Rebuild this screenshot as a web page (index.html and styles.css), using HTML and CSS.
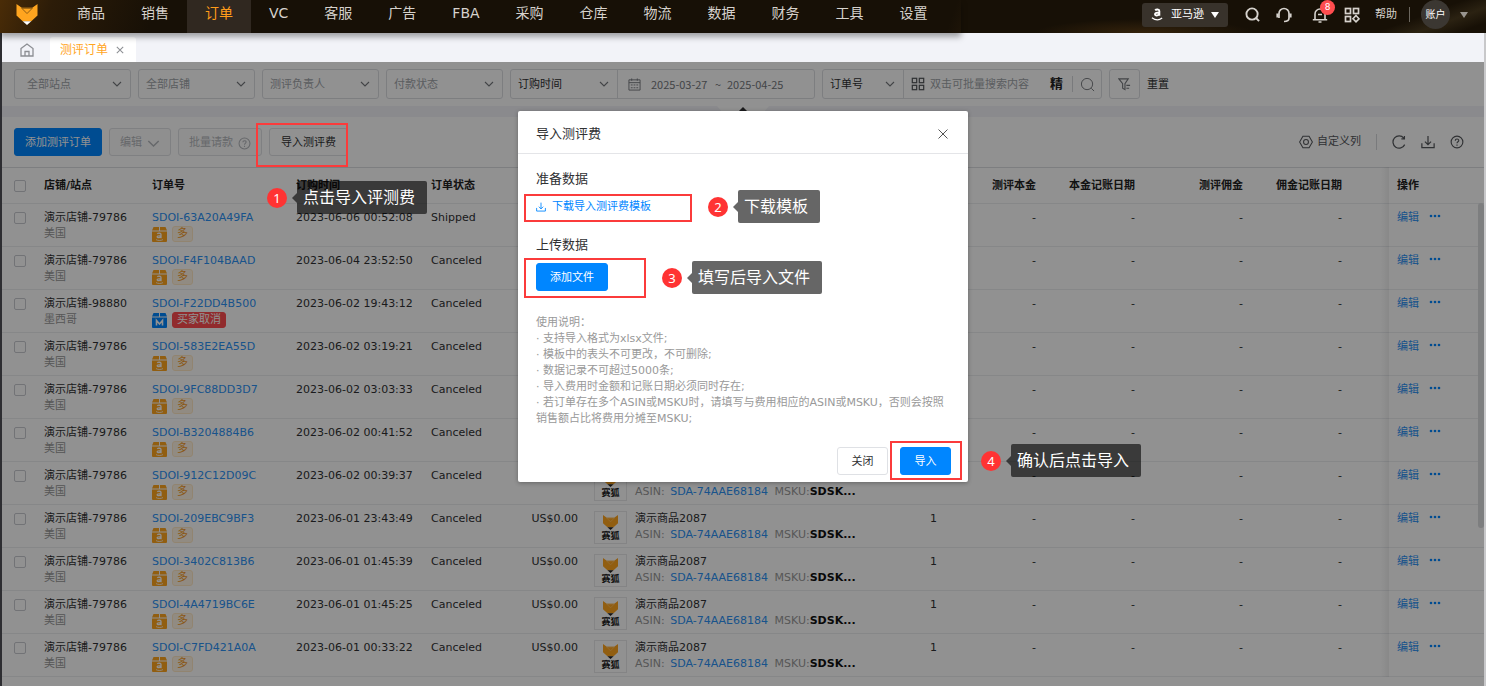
FILE: index.html
```html
<!DOCTYPE html>
<html lang="zh-CN">
<head>
<meta charset="utf-8">
<title>测评订单</title>
<link rel="stylesheet" href="styles.css">
</head>
<body>
<svg class="sprite" aria-hidden="true">
  <symbol id="fox" viewBox="0 0 22 22"><path fill="#ffa51f" d="M0 0l5.500 4h11L22 0v12l-6.500 6h-9L0 12z"/><path class="fox-face" fill="none" stroke-width="1" d="M5.500 4.500L11 10l5.500-5.500z"/><path fill="currentColor" d="M6.500 18h9L11 22z"/></symbol>
  <symbol id="chev" viewBox="0 0 10 10"><path fill="none" stroke="currentColor" stroke-width="1.100" d="M1 3l4 4 4-4"/></symbol>
  <symbol id="box-a" viewBox="0 0 15 15"><path fill="#ffa51f" d="M1.500 0H7v3.500H0zM8 0h5.500L15 3.500H8zM0 4.500h15V14a1 1 0 0 1-1 1H1a1 1 0 0 1-1-1z"/><path fill="none" stroke="#fff" stroke-width="1.300" d="M5.300 6.900c.8-1 3.700-1 3.700.7v3.600M9 8.600c-1.900 0-3.800 0-3.800 1.200 0 1.300 2.700 1.200 3.800-.3"/><path fill="none" stroke="#fff" stroke-width=".8" d="M4 12.600c2 1.200 5 1.200 7 0"/></symbol>
  <symbol id="box-m" viewBox="0 0 15 15"><path fill="#0086ff" d="M1.500 0H7v3.500H0zM8 0h5.500L15 3.500H8zM0 4.500h15V14a1 1 0 0 1-1 1H1a1 1 0 0 1-1-1z"/><path fill="none" stroke="#fff" stroke-width="1.600" d="M4.500 12.500V7.500l3 3.500 3-3.500v5"/></symbol>
  <symbol id="grid" viewBox="0 0 16 16"><g fill="none" stroke="currentColor" stroke-width="1.400"><rect x="1.500" y="1.500" width="5" height="5"/><rect x="9.500" y="1.500" width="5" height="5"/><rect x="1.500" y="9.500" width="5" height="5"/><rect x="9.500" y="9.500" width="5" height="5"/></g></symbol>
  <symbol id="search" viewBox="0 0 16 16"><g fill="none" stroke="currentColor"><circle cx="7.500" cy="7.500" r="6"/><path d="M12 12l3 3"/></g></symbol>
  <symbol id="help" viewBox="0 0 16 16"><g fill="none" stroke="currentColor" stroke-width="1.300"><circle cx="8" cy="8" r="6.700"/><path d="M6 6.500c0-2.600 4-2.600 4-.2 0 1.500-2 1.500-2 3.200M8 10.800v1.400"/></g></symbol>
  <symbol id="down" viewBox="0 0 16 16"><path fill="none" stroke="currentColor" stroke-width="1.400" d="M8 1v10M4.500 7.500L8 11l3.500-3.500M1 9.500v5h14v-5"/></symbol>
  <symbol id="dots" viewBox="0 0 12 4"><g fill="currentColor"><circle cx="2" cy="2" r="1.300"/><circle cx="6" cy="2" r="1.300"/><circle cx="10" cy="2" r="1.300"/></g></symbol>
</svg>

<header class="topbar">
  <div class="brand-nav">
    <a class="logo" href="#" aria-label="赛狐"><svg><use href="#fox"/></svg></a>
    <nav class="nav">
      <a href="#">商品</a><a href="#">销售</a><a href="#" class="active">订单</a><a href="#">VC</a><a href="#">客服</a><a href="#">广告</a><a href="#">FBA</a><a href="#">采购</a><a href="#">仓库</a><a href="#">物流</a><a href="#">数据</a><a href="#">财务</a><a href="#">工具</a><a href="#">设置</a>
    </nav>
  </div>
  <div class="tools">
    <button class="platform" type="button">
      <svg class="i13" viewBox="0 0 14 14"><g fill="none" stroke="#fff"><path stroke-width="2" d="M4.500 2.500c1-1.300 4.500-1.400 4.500.8v5M9 4.800c-2.500 0-4.700.2-4.700 2 0 2 3.700 1.600 4.700-.5"/><path stroke-width="1.300" d="M1 10.500c3.500 2.700 8 2.700 11 .3"/></g></svg>
      亚马逊 <i class="caret"></i>
    </button>
    <button class="tool" type="button" aria-label="搜索"><svg class="i15 bold"><use href="#search"/></svg></button>
    <button class="tool" type="button" aria-label="客服"><svg class="i16" viewBox="0 0 16 16"><g fill="none" stroke="currentColor" stroke-width="1.700"><path d="M3 11V6.500a5 5 0 0 1 10 0V11c0 2-2 3.500-5 3.500"/><path stroke-width="2.200" d="M1.500 6.500v4M14.500 6.500v4"/></g></svg></button>
    <button class="tool bell" type="button" aria-label="通知"><svg class="i16" viewBox="0 0 16 16"><path fill="none" stroke="currentColor" stroke-width="1.600" d="M3 12.500V7a5 5 0 0 1 10 0v5.500M.8 12.700h14.400M6 7.500h4M6.500 15h3"/></svg><span class="count">8</span></button>
    <button class="tool" type="button" aria-label="应用"><svg class="i16" viewBox="0 0 16 16"><g fill="none" stroke="currentColor" stroke-width="1.700"><rect x="1.500" y="1.500" width="5" height="5"/><rect x="9.500" y="1.500" width="5" height="5"/><rect x="1.500" y="9.500" width="5" height="5"/><path d="M12 8.500l3 3.300-3 3-3-3z"/></g></svg></button>
    <a class="help-link" href="#">帮助</a>
    <span class="bar"></span>
    <button class="account" type="button">账户</button>
    <i class="caret dim"></i>
  </div>
</header>

<div class="shell">
  <div class="tabs">
    <a class="home" href="#" aria-label="首页"><svg class="i14" viewBox="0 0 14 14"><path fill="none" stroke="#8c8e93" stroke-width="1.300" d="M1 5.500L7 1l6 4.500V13H1zM5 13V8.500h4V13"/></svg></a>
    <div class="tab">测评订单 <button type="button" aria-label="关闭标签"><svg viewBox="0 0 10 10"><path stroke="#8c8e93" stroke-width="1.300" d="M1 1l8 8M9 1L1 9"/></svg></button></div>
  </div>

  <main class="work">
    <form class="filters">
      <label class="field pick"><select aria-label="站点"><option>全部站点</option></select><svg class="i10"><use href="#chev"/></svg></label>
      <label class="field pick"><select aria-label="店铺"><option>全部店铺</option></select><svg class="i10"><use href="#chev"/></svg></label>
      <label class="field pick"><select aria-label="测评负责人"><option>测评负责人</option></select><svg class="i10"><use href="#chev"/></svg></label>
      <label class="field pick"><select aria-label="付款状态"><option>付款状态</option></select><svg class="i10"><use href="#chev"/></svg></label>
      <div class="field dates">
        <label class="part time-part"><select aria-label="时间类型"><option>订购时间</option></select><svg class="i10"><use href="#chev"/></svg></label>
        <svg class="i13 cal" viewBox="0 0 14 14"><g fill="none" stroke="currentColor"><path d="M1 2h12v11H1zM1 5h12M4 .5V3M10 .5V3"/><path stroke-dasharray="2 1" d="M3 7.500h8M3 10.500h8"/></g></svg>
        <input class="date" aria-label="开始日期" value="2025-03-27"><span>~</span><input class="date" aria-label="结束日期" value="2025-04-25">
      </div>
      <div class="field query">
        <label class="part no-part"><select aria-label="搜索类型"><option>订单号</option></select><svg class="i10"><use href="#chev"/></svg></label>
        <svg class="i14 grid"><use href="#grid"/></svg>
        <input class="keyword" aria-label="搜索内容" placeholder="双击可批量搜索内容">
        <b>精</b><span class="sep"></span><button type="button" aria-label="搜索"><svg class="i15"><use href="#search"/></svg></button>
      </div>
      <button class="field funnel" type="button" aria-label="筛选"><svg class="i13" viewBox="0 0 14 14"><path fill="none" stroke="currentColor" stroke-width="1.200" d="M1 1h10L7.500 6v6.500L5 11V6zM9 8h4M9 11h3"/></svg></button>
      <button class="plain" type="button">重置</button>
    </form>
    <div class="band"><button type="button" class="fold" aria-label="收起"><i></i></button></div>

    <div class="toolbar">
      <button class="btn primary" type="button">添加测评订单</button>
      <button class="btn" type="button" disabled>编辑 <svg class="i13"><use href="#chev"/></svg></button>
      <button class="btn" type="button" disabled>批量请款 <svg class="i13"><use href="#help"/></svg></button>
      <button class="btn wide" type="button">导入测评费</button>
      <div class="right">
        <button class="plain cols" type="button"><svg class="i14" viewBox="0 0 16 16"><g fill="none" stroke="currentColor" stroke-width="1.200"><path d="M4.500 1.500h7L15.300 8l-3.800 6.500h-7L.7 8z"/><circle cx="8" cy="8" r="2.800"/></g></svg>自定义列</button>
        <span class="sep"></span>
        <button class="plain" type="button" aria-label="刷新"><svg class="i14" viewBox="0 0 16 16"><path fill="none" stroke="currentColor" stroke-width="1.400" d="M14.500 11A7 7 0 1 1 13.500 3.500M14.200 1v3.500h-3.500"/></svg></button>
        <button class="plain" type="button" aria-label="下载"><svg class="i14"><use href="#down"/></svg></button>
        <button class="plain" type="button" aria-label="帮助"><svg class="i14"><use href="#help"/></svg></button>
      </div>
    </div>

    <div class="list">
    <table class="orders">
      <colgroup><col class="w-check"><col class="w-store"><col class="w-no"><col class="w-time"><col class="w-state"><col class="w-price"><col><col class="w-qty"><col class="w-a"><col class="w-a"><col class="w-b"><col class="w-c"><col class="w-op"></colgroup>
      <thead><tr><th><input type="checkbox" aria-label="全选"></th><th>店铺/站点</th><th>订单号</th><th>订购时间</th><th>订单状态</th><th></th><th></th><th></th><th class="r">测评本金</th><th class="r">本金记账日期</th><th class="r">测评佣金</th><th class="r last">佣金记账日期</th><th class="op">操作</th></tr></thead>
      <tbody>
      <tr><td><input type="checkbox" aria-label="选择"></td><td>演示店铺-79786<small>美国</small></td><td><a href="#">SDOI-63A20A49FA</a><div class="tags"><svg><use href="#box-a"/></svg><em>多</em></div></td><td>2023-06-06 00:52:08</td><td>Shipped</td><td></td><td></td><td></td><td class="r">-</td><td class="r">-</td><td class="r">-</td><td class="r last">-</td><td class="op"><a href="#">编辑</a><svg><use href="#dots"/></svg></td></tr>
      <tr><td><input type="checkbox" aria-label="选择"></td><td>演示店铺-79786<small>美国</small></td><td><a href="#">SDOI-F4F104BAAD</a><div class="tags"><svg><use href="#box-a"/></svg><em>多</em></div></td><td>2023-06-04 23:52:50</td><td>Canceled</td><td></td><td></td><td></td><td class="r">-</td><td class="r">-</td><td class="r">-</td><td class="r last">-</td><td class="op"><a href="#">编辑</a><svg><use href="#dots"/></svg></td></tr>
      <tr><td><input type="checkbox" aria-label="选择"></td><td>演示店铺-98880<small>墨西哥</small></td><td><a href="#">SDOI-F22DD4B500</a><div class="tags"><svg><use href="#box-m"/></svg><em class="cancel">买家取消</em></div></td><td>2023-06-02 19:43:12</td><td>Canceled</td><td></td><td></td><td></td><td class="r">-</td><td class="r">-</td><td class="r">-</td><td class="r last">-</td><td class="op"><a href="#">编辑</a><svg><use href="#dots"/></svg></td></tr>
      <tr><td><input type="checkbox" aria-label="选择"></td><td>演示店铺-79786<small>美国</small></td><td><a href="#">SDOI-583E2EA55D</a><div class="tags"><svg><use href="#box-a"/></svg><em>多</em></div></td><td>2023-06-02 03:19:21</td><td>Canceled</td><td></td><td></td><td></td><td class="r">-</td><td class="r">-</td><td class="r">-</td><td class="r last">-</td><td class="op"><a href="#">编辑</a><svg><use href="#dots"/></svg></td></tr>
      <tr><td><input type="checkbox" aria-label="选择"></td><td>演示店铺-79786<small>美国</small></td><td><a href="#">SDOI-9FC88DD3D7</a><div class="tags"><svg><use href="#box-a"/></svg><em>多</em></div></td><td>2023-06-02 03:03:33</td><td>Canceled</td><td></td><td></td><td></td><td class="r">-</td><td class="r">-</td><td class="r">-</td><td class="r last">-</td><td class="op"><a href="#">编辑</a><svg><use href="#dots"/></svg></td></tr>
      <tr><td><input type="checkbox" aria-label="选择"></td><td>演示店铺-79786<small>美国</small></td><td><a href="#">SDOI-B3204884B6</a><div class="tags"><svg><use href="#box-a"/></svg><em>多</em></div></td><td>2023-06-02 00:41:52</td><td>Canceled</td><td></td><td></td><td></td><td class="r">-</td><td class="r">-</td><td class="r">-</td><td class="r last">-</td><td class="op"><a href="#">编辑</a><svg><use href="#dots"/></svg></td></tr>
      <tr><td><input type="checkbox" aria-label="选择"></td><td>演示店铺-79786<small>美国</small></td><td><a href="#">SDOI-912C12D09C</a><div class="tags"><svg><use href="#box-a"/></svg><em>多</em></div></td><td>2023-06-02 00:39:37</td><td>Canceled</td><td></td><td><div class="goods"><div class="thumb"><svg><use href="#fox"/></svg><b>赛狐</b></div><div>&nbsp;<small>ASIN: <a href="#">SDA-74AAE68184</a> <span>MSKU:<b>SDSK...</b></span></small></div></div></td><td></td><td class="r">-</td><td class="r">-</td><td class="r">-</td><td class="r last">-</td><td class="op"><a href="#">编辑</a><svg><use href="#dots"/></svg></td></tr>
      <tr><td><input type="checkbox" aria-label="选择"></td><td>演示店铺-79786<small>美国</small></td><td><a href="#">SDOI-209EBC9BF3</a><div class="tags"><svg><use href="#box-a"/></svg><em>多</em></div></td><td>2023-06-01 23:43:49</td><td>Canceled</td><td class="r">US$0.00</td><td><div class="goods"><div class="thumb"><svg><use href="#fox"/></svg><b>赛狐</b></div><div>演示商品2087<small>ASIN: <a href="#">SDA-74AAE68184</a> <span>MSKU:<b>SDSK...</b></span></small></div></div></td><td class="r">1</td><td class="r">-</td><td class="r">-</td><td class="r">-</td><td class="r last">-</td><td class="op"><a href="#">编辑</a><svg><use href="#dots"/></svg></td></tr>
      <tr><td><input type="checkbox" aria-label="选择"></td><td>演示店铺-79786<small>美国</small></td><td><a href="#">SDOI-3402C813B6</a><div class="tags"><svg><use href="#box-a"/></svg><em>多</em></div></td><td>2023-06-01 01:45:39</td><td>Canceled</td><td class="r">US$0.00</td><td><div class="goods"><div class="thumb"><svg><use href="#fox"/></svg><b>赛狐</b></div><div>演示商品2087<small>ASIN: <a href="#">SDA-74AAE68184</a> <span>MSKU:<b>SDSK...</b></span></small></div></div></td><td class="r">1</td><td class="r">-</td><td class="r">-</td><td class="r">-</td><td class="r last">-</td><td class="op"><a href="#">编辑</a><svg><use href="#dots"/></svg></td></tr>
      <tr><td><input type="checkbox" aria-label="选择"></td><td>演示店铺-79786<small>美国</small></td><td><a href="#">SDOI-4A4719BC6E</a><div class="tags"><svg><use href="#box-a"/></svg><em>多</em></div></td><td>2023-06-01 01:45:25</td><td>Canceled</td><td class="r">US$0.00</td><td><div class="goods"><div class="thumb"><svg><use href="#fox"/></svg><b>赛狐</b></div><div>演示商品2087<small>ASIN: <a href="#">SDA-74AAE68184</a> <span>MSKU:<b>SDSK...</b></span></small></div></div></td><td class="r">1</td><td class="r">-</td><td class="r">-</td><td class="r">-</td><td class="r last">-</td><td class="op"><a href="#">编辑</a><svg><use href="#dots"/></svg></td></tr>
      <tr><td><input type="checkbox" aria-label="选择"></td><td>演示店铺-79786<small>美国</small></td><td><a href="#">SDOI-C7FD421A0A</a><div class="tags"><svg><use href="#box-a"/></svg><em>多</em></div></td><td>2023-06-01 00:33:22</td><td>Canceled</td><td class="r">US$0.00</td><td><div class="goods"><div class="thumb"><svg><use href="#fox"/></svg><b>赛狐</b></div><div>演示商品2087<small>ASIN: <a href="#">SDA-74AAE68184</a> <span>MSKU:<b>SDSK...</b></span></small></div></div></td><td class="r">1</td><td class="r">-</td><td class="r">-</td><td class="r">-</td><td class="r last">-</td><td class="op"><a href="#">编辑</a><svg><use href="#dots"/></svg></td></tr>
      </tbody>
    </table>
    <div class="fixed-edge"></div>
    <div class="thumb-bar"></div>
    </div>

    <div class="mask">
      <section class="dialog" role="dialog" aria-label="导入测评费">
        <div class="dialog-head"><h2>导入测评费</h2><button type="button" aria-label="关闭"><svg viewBox="0 0 10 10"><path stroke="#555" d="M.5.5l9 9M9.500.5l-9 9"/></svg></button></div>
        <div class="dialog-body">
          <h3>准备数据</h3>
          <a class="download" href="#"><svg class="i10"><use href="#down"/></svg>下载导入测评费模板</a>
          <h3>上传数据</h3>
          <button class="btn primary upload" type="button">添加文件</button>
          <div class="notes">
            <p>使用说明：</p>
            <p>· 支持导入格式为xlsx文件;</p>
            <p>· 模板中的表头不可更改，不可删除;</p>
            <p>· 数据记录不可超过5000条;</p>
            <p>· 导入费用时金额和记账日期必须同时存在;</p>
            <p>· 若订单存在多个ASIN或MSKU时，请填写与费用相应的ASIN或MSKU，否则会按照销售额占比将费用分摊至MSKU;</p>
          </div>
        </div>
        <div class="dialog-foot"><button class="btn" type="button">关闭</button><button class="btn primary" type="button">导入</button></div>
        <div class="frame f2"></div><div class="frame f3"></div><div class="frame f4"></div>
        <div class="step s2"><span>2</span><p>下载模板</p></div>
        <div class="step s3"><span>3</span><p>填写后导入文件</p></div>
        <div class="step s4"><span>4</span><p>确认后点击导入</p></div>
      </section>
    </div>
    <div class="frame f1"></div>
    <div class="step s1"><span>1</span><p>点击导入评测费</p></div>
  </main>
</div>
</body>
</html>
```

FILE: styles.css
```css
* { box-sizing: border-box; }
body {
  margin: 0; height: 100vh; overflow: hidden; display: flex; flex-direction: column;
  font: 11px/16px "DejaVu Sans", "Noto Sans CJK SC", sans-serif; color: #303133; background: #fff;
}
button, input, select { font: inherit; color: inherit; margin: 0; padding: 0; border: 0; background: none; outline: 0; }
a { color: #2c92f5; text-decoration: none; }
h2, h3, p { margin: 0; font-weight: 400; }
svg { display: block; flex: none; }
.sprite { position: absolute; width: 0; height: 0; }
.i10 { width: 10px; height: 10px; }
.i13 { width: 13px; height: 13px; }
.i14 { width: 14px; height: 14px; }
.i15 { width: 15px; height: 15px; }
.i16 { width: 16px; height: 16px; }
.bold { stroke-width: 2; }
.fox-face { stroke: var(--face); }

/* top bar */
.topbar {
  flex: none; height: 33px; display: flex; justify-content: space-between; position: relative; z-index: 2; color: #d6d2cd;
  background: radial-gradient(ellipse 110px 14px at 77% 100%, #35230c, transparent), linear-gradient(160deg, transparent 60%, #2b2212 75%, transparent 90%) right / 190px 100% no-repeat, #171006;
}
.brand-nav {
  display: flex; width: 961px; box-shadow: 0 4px 6px rgba(0, 0, 0, .35);
  background: linear-gradient(110deg, #4a2c07 0, #2c1c08 50px, #171006 150px, #171006 900px, #2b1d0b 945px, #171006 950px);
}
.logo { width: 59px; padding: 4px 0 0 16px; flex: none; color: #fff; --face: #8a5a12; }
.logo svg { width: 22px; height: 21px; }
.nav { display: flex; }
.nav a { padding: 0 18px; font-size: 14px; line-height: 26px; text-align: center; color: #d6d2cd; }
.nav .active { color: #ff9c1a; background: #302820; }
.tools { display: flex; align-items: center; height: 29px; padding-right: 18px; gap: 16px; }
.platform { display: flex; align-items: center; gap: 7px; width: 86px; height: 24px; padding-left: 9px; border-radius: 3px; background: #38322b; color: #fff; margin-right: 1px; }
.caret { border: 4px solid transparent; border-top: 6px solid #fff; border-bottom: 0; }
.caret.dim { border-top-color: #99958f; margin-left: -6px; }
.tool { position: relative; }
.count { position: absolute; left: 8px; top: -7px; width: 15px; height: 15px; border-radius: 8px; background: #ff4d4f; color: #fff; font-size: 9px; line-height: 15px; }
.bell { margin-left: 4px; }
.help-link { color: #d6d2cd; margin-left: -1px; }
.bar { width: 1px; height: 15px; background: #6b665e; margin: 0 -5px 0 -4px; }
.account { width: 29px; height: 29px; border-radius: 50%; background: #3b3732; color: #fff; font-size: 10px; }

/* page shell and tabs */
.shell { flex: 1; min-height: 0; display: flex; flex-direction: column; border-left: 2px solid #2d2d31; border-right: 2px solid #c8c8ca; }
.tabs { flex: none; height: 29px; display: flex; align-items: flex-end; background: #f2f3f8; }
.home { width: 48px; padding: 0 0 5px 18px; }
.tab { display: flex; align-items: center; gap: 8px; height: 25px; padding: 0 12px 0 10px; background: #fff; border-radius: 3px 3px 0 0; color: #ffa51f; font-size: 12px; }
.tab svg { width: 8px; height: 8px; }
.work { position: relative; flex: 1; min-height: 0; }

/* filters */
.filters { display: flex; align-items: center; gap: 7px; height: 44px; padding: 0 12px; }
.field { display: flex; align-items: center; height: 30px; border: 1px solid #dcdee2; border-radius: 3px; color: #75787d; }
.field select { flex: 1; min-width: 0; appearance: none; padding-top: 2px; }
.pick { width: 117px; padding: 0 8px 0 12px; }
.pick select { color: #a0a4a9; }
.pick + .pick { padding-left: 7px; }
.dates { width: 305px; }
.part { display: flex; align-items: center; height: 100%; padding: 0 8px 0 7px; border-right: 1px solid #dcdee2; }
.part select { color: #303133; }
.time-part { width: 107px; }
.cal { margin: 0 10px; }
.date { width: 58px; }
.date, .dates span { font-family: "Noto Sans CJK SC", sans-serif; }
.dates span { width: 18px; text-align: center; }
.query { width: 280px; }
.no-part { width: 81px; }
.grid { margin: 0 5px 0 7px; color: #55585c; }
.keyword { flex: 1; min-width: 0; padding-top: 2px; }
.keyword::placeholder { color: #a0a4a9; opacity: 1; }
.query b { font-size: 13px; color: #222; }
.sep { width: 1px; height: 16px; background: #d5d7da; }
.query .sep { margin: 0 7px 0 9px; }
.query button { margin-right: 6px; }
.funnel { width: 31px; justify-content: center; }
.plain { color: #303133; padding-top: 2px; }
.band { display: flex; justify-content: center; height: 11px; background: #f2f3f8; }
.fold { width: 52px; height: 6px; background: #fff; display: flex; justify-content: center; clip-path: polygon(0 0, 100% 0, 90% 100%, 10% 100%); }
.fold i { border: 5px solid transparent; border-bottom: 5px solid #303133; border-top: 0; }

/* toolbar */
.toolbar { display: flex; align-items: center; gap: 7px; height: 50px; padding: 0 20px 0 12px; }
.btn { display: flex; align-items: center; justify-content: center; gap: 5px; height: 28px; padding: 2px 10px 0; border: 1px solid #dfe1e5; border-radius: 3px; background: #fff; }
.btn:disabled { color: #b4b7bc; border-color: #dfe1e5; background: #fbfbfb; }
.btn.primary { background: #0086ff; border-color: #0086ff; color: #fff; }
.btn.wide { width: 79px; }
.right { margin-left: auto; display: flex; align-items: center; gap: 15px; }
.cols { display: flex; align-items: center; gap: 4px; }
.right .plain { color: #55585c; padding-top: 0; }

/* order table */
.list { position: relative; }
.orders { width: 100%; table-layout: fixed; border-collapse: separate; border-spacing: 0; border-top: 1px solid #dcdee2; }
.w-check { width: 34px; } .w-store { width: 108px; } .w-no { width: 144px; } .w-time { width: 135px; }
.w-state { width: 92px; } .w-price { width: 71px; } .w-qty { width: 56px; } .w-a { width: 99px; }
.w-b { width: 108px; } .w-c { width: 138px; } .w-op { width: 95px; }
th { height: 36px; padding: 1px 8px 0; text-align: left; border-bottom: 1px solid #ebedf0; color: #222; white-space: nowrap; }
td { height: 43px; padding: 6px 8px 0; vertical-align: top; border-bottom: 1px solid #ebedf0; white-space: nowrap; }
th:first-child, td:first-child { padding: 0 0 0 12px; }
td:first-child { padding-top: 8px; }
.r { text-align: right; }
.r.last { padding-right: 47px; }
.orders input { display: block; appearance: none; width: 12px; height: 12px; border: 1px solid #c8cbd0; border-radius: 2px; background: #fff; }
small { display: block; font-size: 11px; color: #999; }
.tags { display: flex; align-items: center; gap: 5px; height: 16px; }
.tags svg { width: 15px; height: 15px; }
.tags em { font-style: normal; padding: 0 4px; border: 1px solid #ffe8c6; border-radius: 3px; background: #fff5e4; color: #f39a2b; line-height: 14px; }
.tags .cancel { background: #ff4d4f; border-color: #ff4d4f; color: #fff; }
.goods { display: flex; gap: 8px; }
.thumb { width: 33px; height: 33px; display: flex; flex-direction: column; align-items: center; border: 1px solid #e8e8ea; padding-top: 3px; flex: none; color: #222; --face: #ffc56b; }
.thumb svg { width: 15px; height: 15px; }
.thumb b { font-size: 9px; line-height: 13px; }
.goods a { margin-left: 2px; }
.goods span { margin-left: 3px; }
.goods small b { color: #111; }
.op svg { display: inline-block; width: 12px; height: 4px; margin-left: 10px; color: #0086ff; vertical-align: 3px; }
.fixed-edge { position: absolute; top: 0; bottom: 0; right: 95px; width: 8px; background: linear-gradient(90deg, transparent, rgba(0, 0, 0, .06)); }
.thumb-bar { position: absolute; top: 36px; right: 0; width: 6px; height: 325px; border-radius: 3px; background: #dcdde0; }

/* dialog */
.mask { position: absolute; inset: 0; display: flex; justify-content: center; align-items: flex-start; padding-top: 49px; background: rgba(0, 0, 0, .43); }
.dialog { position: relative; width: 450px; background: #fff; border-radius: 2px; box-shadow: 0 1px 4px rgba(0, 0, 0, .3); }
.dialog-head { display: flex; align-items: center; justify-content: space-between; height: 43px; padding: 3px 20px 0 18px; border-bottom: 1px solid #e4e5e8; }
.dialog-head svg { width: 10px; height: 10px; }
h2, h3 { font-size: 13px; line-height: 18px; }
.dialog-body { padding: 16px 18px 0; }
.download { display: flex; align-items: center; gap: 6px; height: 18px; margin: 10px 0 20px; color: #0086ff; }
.upload { margin: 9px 0 24px; }
.notes { color: #999; }
.dialog-foot { display: flex; justify-content: flex-end; gap: 12px; padding: 20px 17px 7px; }
.upload.btn { width: 72px; }
.dialog-foot .btn { width: 51px; }

/* guide marks */
.frame { position: absolute; border: 2px solid #fb3b3b; }
.f1 { left: 254px; top: 61px; width: 92px; height: 44px; }
.f2 { left: 6px; top: 83px; width: 168px; height: 28px; }
.f3 { left: 6px; top: 147px; width: 122px; height: 40px; }
.f4 { right: 6px; bottom: 2px; width: 72px; height: 39px; }
.step { position: absolute; display: flex; align-items: center; gap: 20px; white-space: nowrap; }
.step span { width: 20px; height: 20px; margin-right: -10px; border-radius: 50%; background: #ff3333; color: #fff; font: 13px/20px "Noto Sans", sans-serif; text-align: center; }
.step p { position: relative; padding: 1px 12px 0 6px; border-radius: 2px; background: rgba(0, 0, 0, .6); color: #fff; font-size: 16px; line-height: 32px; }
.step p::before { content: ""; position: absolute; left: -5px; top: 12px; border: 5px solid transparent; border-right-color: rgba(0, 0, 0, .6); border-left: 0; }
.s1 { left: 265px; top: 119px; }
.s2 { left: 190px; top: 79px; }
.s3 { left: 144px; top: 150px; }
.s4 { left: 463px; top: 333px; }
```
